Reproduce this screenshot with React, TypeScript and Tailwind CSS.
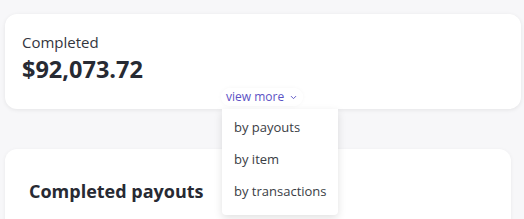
import { ChevronDown } from 'lucide-react';

const font = { fontFamily: '"Open Sans", Lato, sans-serif' };

function ViewMoreMenu() {
    const items = ['by payouts', 'by item', 'by transactions'];
    return (
        <div className="absolute left-[211px] top-[74px] flex flex-col items-start">
            <button className="ml-[5px] flex h-[18px] w-[82px] items-center gap-[5px] rounded-full bg-white/80 pl-[5px] text-[12px] text-[#5b52c4] shadow-[0_0_4px_rgba(0,0,0,0.04)]">
                <span>view more</span>
                <ChevronDown className="h-[9px] w-[9px]" strokeWidth={2.5} />
            </button>
            <div className="mt-[3px] ml-[6px] w-[116px] rounded-b-[4px] bg-white pt-[3px] pb-[7px] shadow-[0_3px_8px_rgba(0,0,0,0.12)]">
                {items.map((it) => (
                    <div key={it} className="flex h-[32px] items-center pl-[12px] text-[13px] text-[#3a3d45]">
                        {it}
                    </div>
                ))}
            </div>
        </div>
    );
}

export default function App() {
    return (
        <div className="h-[219px] w-[524px] overflow-hidden bg-[#f7f7f9] px-[5px] pt-[14px]" style={font}>
            <div className="relative z-10 h-[95px] w-[516px] rounded-[12px] bg-white px-[17px] pt-[18px] shadow-[0_1px_4px_rgba(0,0,0,0.08)]">
                <div className="text-[15px] leading-[20px] text-[#33363e]">Completed</div>
                <div className="mt-[3px] text-[23.5px] font-bold leading-[29px] text-[#272a33]">$92,073.72</div>
                <ViewMoreMenu />
            </div>
            <div className="mt-[40px] h-[120px] w-[506px] rounded-[12px] bg-white px-[24px] pt-[30px] shadow-[0_1px_4px_rgba(0,0,0,0.06)]">
                <h2 className="text-[18px] font-bold leading-[24px] text-[#272a33]">Completed payouts</h2>
            </div>
        </div>
    );
}
